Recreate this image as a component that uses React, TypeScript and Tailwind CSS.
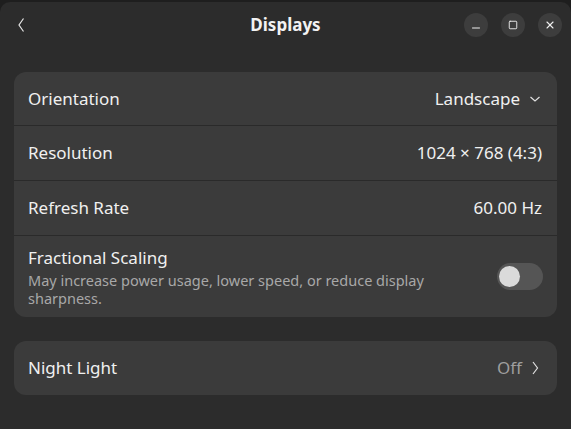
import { Minus, Square, X } from "lucide-react";

const Row = ({ label, value, chevron, first }: { label: string; value: string; chevron?: boolean; first?: boolean }) => (
  <div className={`flex items-center justify-between pl-[14px] pr-[15px] ${first ? "h-[54px]" : "h-[55px]"}`}>
    <span className="text-[17px] text-[#f0f0f0]">{label}</span>
    <div className="flex items-center gap-[9px]">
      <span className="text-[17px] text-[#f0f0f0]">{value}</span>
      {chevron && (
        <svg width="12" height="8" viewBox="0 0 12 8" className="mr-[1px] mt-[1px]">
          <path d="M1.5 2 L6 6 L10.5 2" fill="none" stroke="#e0e0e0" strokeWidth="1.2" />
        </svg>
      )}
    </div>
  </div>
);

export default function App() {
  return (
    <div className="h-[429px] w-[571px] overflow-hidden bg-[#1e1e1e] font-['Noto_Sans',sans-serif]">
      <div className="mt-[2px] h-[427px] rounded-t-[10px] bg-[#2c2c2c]">
        {/* header */}
        <div className="grid h-[46px] grid-cols-[1fr_auto_1fr] items-center px-[9px]">
          <svg width="8" height="16" viewBox="0 0 8 16" className="mb-[1px] ml-[8px]">
            <path d="M6.5 1.5 L2 8 L6.5 14.5" fill="none" stroke="#e6e6e6" strokeWidth="1.2" />
          </svg>
          <span className="text-[17px] font-bold text-[#f2f2f2]">Displays</span>
          <div className="flex justify-end gap-[13px]">
            <button className="flex h-6 w-6 items-center justify-center rounded-full bg-[#3d3d3d] text-[#f0f0f0]">
              <Minus size={12} strokeWidth={2} className="mt-[6px]" />
            </button>
            <button className="flex h-6 w-6 items-center justify-center rounded-full bg-[#3d3d3d] text-[#f0f0f0]">
              <Square size={10} strokeWidth={2.2} />
            </button>
            <button className="flex h-6 w-6 items-center justify-center rounded-full bg-[#3d3d3d] text-[#f0f0f0]">
              <X size={12} strokeWidth={2.2} />
            </button>
          </div>
        </div>

        <div className="px-[14px] pt-[24px]">
          <div className="divide-y divide-[#2a2a2a] overflow-hidden rounded-[12px] bg-[#3b3b3b]">
            <Row label="Orientation" value="Landscape" chevron first />
            <Row label="Resolution" value="1024 × 768 (4:3)" />
            <Row label="Refresh Rate" value="60.00 Hz" />
            <div className="flex h-[81px] items-center justify-between pl-[14px] pr-[14px]">
              <div className="flex flex-col">
                <span className="text-[17px] leading-[22px] text-[#f0f0f0]">Fractional Scaling</span>
                <span className="mt-[2px] w-[420px] text-[14.5px] leading-[18px] text-[#a8a8a8]">
                  May increase power usage, lower speed, or reduce display sharpness.
                </span>
              </div>
              <div className="flex h-[27px] w-[46px] items-center rounded-full bg-[#555555] px-[2px]">
                <div className="h-[21px] w-[21px] rounded-full bg-[#dadada]" />
              </div>
            </div>
          </div>

          <div className="mt-[24px] flex h-[54px] items-center justify-between rounded-[12px] bg-[#3b3b3b] pl-[14px] pr-[18px]">
            <span className="text-[17px] text-[#f0f0f0]">Night Light</span>
            <div className="flex items-center gap-[10px]">
              <span className="text-[17px] text-[#9e9e9e]">Off</span>
              <svg width="7" height="14" viewBox="0 0 7 14">
                <path d="M1 1 L5.5 7 L1 13" fill="none" stroke="#e0e0e0" strokeWidth="1.2" />
              </svg>
            </div>
          </div>
        </div>
      </div>
    </div>
  );
}
